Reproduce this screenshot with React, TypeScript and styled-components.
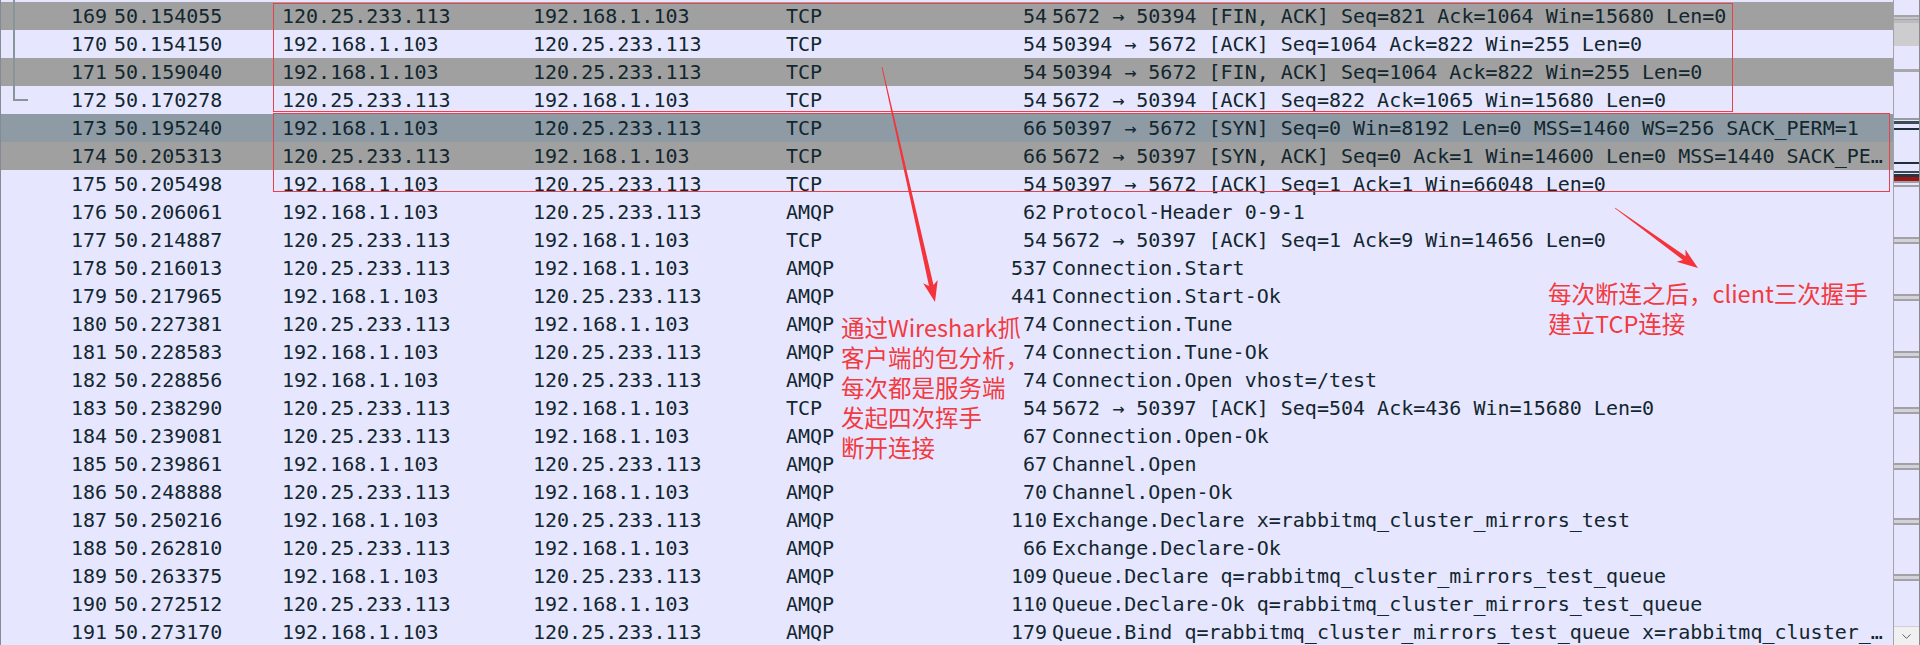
import React from 'react';
import styled, { createGlobalStyle } from 'styled-components';
import { ChevronDown } from 'lucide-react';

const GlobalStyle = createGlobalStyle`
  html, body { margin: 0; padding: 0; background: #e7e6ff; overflow: hidden; }
  #root { width: 1920px; height: 645px; }
`;

type Tone = 'plain' | 'fin' | 'sel';
type Rel = 'none' | 'first' | 'mid' | 'end';

interface Packet {
  no: number;
  time: string;
  src: string;
  dst: string;
  proto: string;
  len: number;
  info: string;
  tone: Tone;
  rel: Rel;
}

const A = '120.25.233.113';
const B = '192.168.1.103';

const ROWS: Packet[] = [
  { no: 169, time: '50.154055', src: A, dst: B, proto: 'TCP', len: 54, info: '5672 → 50394 [FIN, ACK] Seq=821 Ack=1064 Win=15680 Len=0', tone: 'fin', rel: 'first' },
  { no: 170, time: '50.154150', src: B, dst: A, proto: 'TCP', len: 54, info: '50394 → 5672 [ACK] Seq=1064 Ack=822 Win=255 Len=0', tone: 'plain', rel: 'mid' },
  { no: 171, time: '50.159040', src: B, dst: A, proto: 'TCP', len: 54, info: '50394 → 5672 [FIN, ACK] Seq=1064 Ack=822 Win=255 Len=0', tone: 'fin', rel: 'mid' },
  { no: 172, time: '50.170278', src: A, dst: B, proto: 'TCP', len: 54, info: '5672 → 50394 [ACK] Seq=822 Ack=1065 Win=15680 Len=0', tone: 'plain', rel: 'end' },
  { no: 173, time: '50.195240', src: B, dst: A, proto: 'TCP', len: 66, info: '50397 → 5672 [SYN] Seq=0 Win=8192 Len=0 MSS=1460 WS=256 SACK_PERM=1', tone: 'sel', rel: 'none' },
  { no: 174, time: '50.205313', src: A, dst: B, proto: 'TCP', len: 66, info: '5672 → 50397 [SYN, ACK] Seq=0 Ack=1 Win=14600 Len=0 MSS=1440 SACK_PERM=1 WS=512', tone: 'fin', rel: 'none' },
  { no: 175, time: '50.205498', src: B, dst: A, proto: 'TCP', len: 54, info: '50397 → 5672 [ACK] Seq=1 Ack=1 Win=66048 Len=0', tone: 'plain', rel: 'none' },
  { no: 176, time: '50.206061', src: B, dst: A, proto: 'AMQP', len: 62, info: 'Protocol-Header 0-9-1', tone: 'plain', rel: 'none' },
  { no: 177, time: '50.214887', src: A, dst: B, proto: 'TCP', len: 54, info: '5672 → 50397 [ACK] Seq=1 Ack=9 Win=14656 Len=0', tone: 'plain', rel: 'none' },
  { no: 178, time: '50.216013', src: A, dst: B, proto: 'AMQP', len: 537, info: 'Connection.Start', tone: 'plain', rel: 'none' },
  { no: 179, time: '50.217965', src: B, dst: A, proto: 'AMQP', len: 441, info: 'Connection.Start-Ok', tone: 'plain', rel: 'none' },
  { no: 180, time: '50.227381', src: A, dst: B, proto: 'AMQP', len: 74, info: 'Connection.Tune', tone: 'plain', rel: 'none' },
  { no: 181, time: '50.228583', src: B, dst: A, proto: 'AMQP', len: 74, info: 'Connection.Tune-Ok', tone: 'plain', rel: 'none' },
  { no: 182, time: '50.228856', src: B, dst: A, proto: 'AMQP', len: 74, info: 'Connection.Open vhost=/test', tone: 'plain', rel: 'none' },
  { no: 183, time: '50.238290', src: A, dst: B, proto: 'TCP', len: 54, info: '5672 → 50397 [ACK] Seq=504 Ack=436 Win=15680 Len=0', tone: 'plain', rel: 'none' },
  { no: 184, time: '50.239081', src: A, dst: B, proto: 'AMQP', len: 67, info: 'Connection.Open-Ok', tone: 'plain', rel: 'none' },
  { no: 185, time: '50.239861', src: B, dst: A, proto: 'AMQP', len: 67, info: 'Channel.Open', tone: 'plain', rel: 'none' },
  { no: 186, time: '50.248888', src: A, dst: B, proto: 'AMQP', len: 70, info: 'Channel.Open-Ok', tone: 'plain', rel: 'none' },
  { no: 187, time: '50.250216', src: B, dst: A, proto: 'AMQP', len: 110, info: 'Exchange.Declare x=rabbitmq_cluster_mirrors_test', tone: 'plain', rel: 'none' },
  { no: 188, time: '50.262810', src: A, dst: B, proto: 'AMQP', len: 66, info: 'Exchange.Declare-Ok', tone: 'plain', rel: 'none' },
  { no: 189, time: '50.263375', src: B, dst: A, proto: 'AMQP', len: 109, info: 'Queue.Declare q=rabbitmq_cluster_mirrors_test_queue', tone: 'plain', rel: 'none' },
  { no: 190, time: '50.272512', src: A, dst: B, proto: 'AMQP', len: 110, info: 'Queue.Declare-Ok q=rabbitmq_cluster_mirrors_test_queue', tone: 'plain', rel: 'none' },
  { no: 191, time: '50.273170', src: B, dst: A, proto: 'AMQP', len: 179, info: 'Queue.Bind q=rabbitmq_cluster_mirrors_test_queue x=rabbitmq_cluster_mirrors_test k=rabbitmq_cluster_mirrors_test_queue', tone: 'plain', rel: 'none' },
];

const TONE_BG: Record<Tone, string> = {
  plain: '#e7e6ff',
  fin: '#a0a0a0',
  sel: '#8e9ba5',
};

const Viewport = styled.div`
  position: relative;
  display: flex;
  width: 1920px;
  height: 645px;
  overflow: hidden;
  background: #e7e6ff;
`;

const PacketList = styled.div`
  flex: 1;
  min-width: 0;
  display: flex;
  flex-direction: column;
  padding-top: 2px;
  border-left: 1px solid #868a96;
  font-family: "DejaVu Sans Mono", "Liberation Mono", monospace;
  font-size: 20px;
  color: #12272e;
`;

const Row = styled.div<{ $tone: Tone }>`
  flex: none;
  display: grid;
  grid-template-columns: 110px 168px 251px 253px 160px 107px 838px 1fr;
  height: 28px;
  line-height: 28px;
  white-space: pre;
  background: ${(p) => TONE_BG[p.$tone]};
`;

const Cell = styled.div`
  padding-left: 3px;
  overflow: hidden;
`;

const NumCell = styled.div`
  position: relative;
  text-align: right;
  padding-right: 4px;
`;

const LenCell = styled.div`
  text-align: right;
  padding-right: 3px;
`;

const InfoCell = styled.div`
  padding-left: 2px;
  overflow: hidden;
  text-overflow: ellipsis;
`;

const RelLine = styled.span<{ $rel: Rel }>`
  position: absolute;
  left: 12px;
  box-sizing: border-box;
  border-left: 2px solid #8a959b;
  top: ${(p) => (p.$rel === 'first' ? '-2px' : '0')};
  height: ${(p) => (p.$rel === 'first' ? '30px' : p.$rel === 'end' ? '15px' : '28px')};
  width: ${(p) => (p.$rel === 'end' ? '15px' : '2px')};
  border-bottom: ${(p) => (p.$rel === 'end' ? '2px solid #8a959b' : 'none')};
`;

const ScrollBar = styled.div`
  flex: none;
  width: 27px;
  box-sizing: border-box;
  display: flex;
  flex-direction: column;
  border-left: 1px solid #a3a3ae;
  border-right: 1px solid #8a8a8e;
  background: #e7e6ff;
`;

const Track = styled.div`
  position: relative;
  flex: 1;
`;

const Mark = styled.div<{ $top: number; $h: number; $c: string }>`
  position: absolute;
  left: 0;
  right: 0;
  top: ${(p) => p.$top}px;
  height: ${(p) => p.$h}px;
  background: ${(p) => p.$c};
`;

const DoubleMark = styled.div<{ $top: number }>`
  position: absolute;
  left: 0;
  right: 0;
  top: ${(p) => p.$top}px;
  height: 7px;
  box-sizing: border-box;
  border-top: 2px solid #a2a2a6;
  border-bottom: 2px solid #a2a2a6;
  background: #d2d2d8;
`;

const DownButton = styled.div`
  flex: none;
  height: 18px;
  display: flex;
  align-items: center;
  justify-content: center;
  background: #f0f0f0;
  border-top: 1px solid #d0d0d0;
  color: #606060;
`;

const Overlay = styled.div`
  position: absolute;
  inset: 0;
  pointer-events: none;
`;

const RedBox = styled.div<{ $x: number; $y: number; $w: number; $h: number }>`
  position: absolute;
  left: ${(p) => p.$x}px;
  top: ${(p) => p.$y}px;
  width: ${(p) => p.$w}px;
  height: ${(p) => p.$h}px;
  box-sizing: border-box;
  border: 1px solid #e8414a;
`;

const Note = styled.div<{ $x: number; $y: number }>`
  position: absolute;
  left: ${(p) => p.$x}px;
  top: ${(p) => p.$y}px;
  font-family: "Noto Sans CJK SC", "Noto Sans", sans-serif;
  font-size: 23.5px;
  line-height: 30px;
  color: #f23a3f;
  white-space: pre;
`;

const ArrowLayer = styled.svg`
  position: absolute;
  left: 0;
  top: 0;
  width: 1920px;
  height: 645px;
`;

function arrowPoints(x1: number, y1: number, x2: number, y2: number): string {
  const headLen = 21;
  const headHalf = 7.5;
  const shaftHalf = 2.3;
  const tailHalf = 0.4;
  const notch = 4;
  const dx = x2 - x1;
  const dy = y2 - y1;
  const L = Math.hypot(dx, dy);
  const ux = dx / L;
  const uy = dy / L;
  const nx = -uy;
  const ny = ux;
  const bx = x2 - ux * headLen;
  const by = y2 - uy * headLen;
  const sx = bx + ux * notch;
  const sy = by + uy * notch;
  const pts = [
    [x1 + nx * tailHalf, y1 + ny * tailHalf],
    [sx + nx * shaftHalf, sy + ny * shaftHalf],
    [bx + nx * headHalf, by + ny * headHalf],
    [x2, y2],
    [bx - nx * headHalf, by - ny * headHalf],
    [sx - nx * shaftHalf, sy - ny * shaftHalf],
    [x1 - nx * tailHalf, y1 - ny * tailHalf],
  ];
  return pts.map(([x, y]) => `${x.toFixed(1)},${y.toFixed(1)}`).join(' ');
}

const SINGLE_MARKS: { top: number; h: number; c: string }[] = [
  { top: 15, h: 2, c: '#a4a4a8' },
  { top: 17, h: 2, c: '#c4c4c8' },
  { top: 19, h: 1, c: '#a4a4a8' },
  { top: 20, h: 3, c: '#bcbcc0' },
  { top: 23, h: 23, c: '#cdcdd0' },
  { top: 69, h: 3, c: '#a8a8ac' },
  { top: 118, h: 2, c: '#9a9aa0' },
  { top: 121, h: 3, c: '#3c4a54' },
  { top: 128, h: 2, c: '#1e2e3a' },
  { top: 162, h: 2, c: '#1e2e3a' },
  { top: 171, h: 2, c: '#3c4a54' },
  { top: 174, h: 3, c: '#26343e' },
  { top: 177, h: 4, c: '#9c1414' },
  { top: 181, h: 2, c: '#a0a0a4' },
  { top: 185, h: 2, c: '#a0a0a4' },
];

const DOUBLE_MARKS = [237, 294, 351, 407, 463, 518, 574];

export default function App() {
  return (
    <>
      <GlobalStyle />
      <Viewport>
        <PacketList>
          {ROWS.map((r) => (
            <Row key={r.no} $tone={r.tone}>
              <NumCell>
                {r.rel !== 'none' && <RelLine $rel={r.rel} />}
                {r.no}
              </NumCell>
              <Cell>{r.time}</Cell>
              <Cell>{r.src}</Cell>
              <Cell>{r.dst}</Cell>
              <Cell>{r.proto}</Cell>
              <LenCell>{r.len}</LenCell>
              <InfoCell>{r.info}</InfoCell>
              <div />
            </Row>
          ))}
        </PacketList>
        <ScrollBar>
          <Track>
            {SINGLE_MARKS.map((m, i) => (
              <Mark key={i} $top={m.top} $h={m.h} $c={m.c} />
            ))}
            {DOUBLE_MARKS.map((t) => (
              <DoubleMark key={t} $top={t} />
            ))}
          </Track>
          <DownButton>
            <ChevronDown size={15} strokeWidth={1.6} />
          </DownButton>
        </ScrollBar>

        <Overlay>
          <RedBox $x={273} $y={3} $w={1460} $h={109} />
          <RedBox $x={273} $y={113} $w={1617} $h={79} />
          <ArrowLayer viewBox="0 0 1920 645">
            <polygon points={arrowPoints(882, 67, 935, 302)} fill="#f4333b" />
            <polygon points={arrowPoints(1615, 208, 1698, 268)} fill="#f4333b" />
          </ArrowLayer>
          <Note $x={841} $y={312}>
            {'通过Wireshark抓\n客户端的包分析，\n每次都是服务端\n发起四次挥手\n断开连接'}
          </Note>
          <Note $x={1548} $y={278}>
            {'每次断连之后，client三次握手\n建立TCP连接'}
          </Note>
        </Overlay>
      </Viewport>
    </>
  );
}
